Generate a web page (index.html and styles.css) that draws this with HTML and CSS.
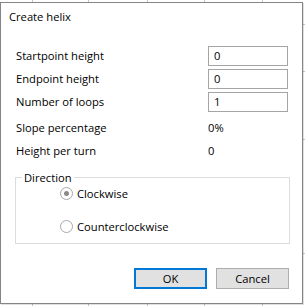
FILE: index.html
```html
<!DOCTYPE html>
<html>
<head>
<meta charset="utf-8">
<link rel="stylesheet" href="styles.css">
</head>
<body>
<div class="dialog">
  <div class="title">Create helix</div>
  <div class="form inputs">
    <label class="lbl">Startpoint height</label>
    <div class="field">0</div>
    <label class="lbl">Endpoint height</label>
    <div class="field">0</div>
    <label class="lbl">Number of loops</label>
    <div class="field">1</div>
  </div>
  <div class="form values">
    <div class="lbl">Slope percentage</div>
    <div class="val">0%</div>
    <div class="lbl">Height per turn</div>
    <div class="val">0</div>
  </div>
  <fieldset class="group">
    <legend class="legend">Direction</legend>
    <label class="radio"><span class="dot checked"></span>Clockwise</label>
    <label class="radio"><span class="dot"></span>Counterclockwise</label>
  </fieldset>
  <div class="buttons">
    <div class="btn primary">OK</div>
    <div class="btn">Cancel</div>
  </div>
</div>
</body>
</html>
```

FILE: styles.css
```css
html, body {
  margin: 0;
  padding: 0;
}
body {
  width: 305px;
  height: 306px;
  overflow: hidden;
  font-family: "Segoe UI", "Open Sans", sans-serif;
  font-size: 11.2px;
  line-height: 15px;
  color: #000;
  background-color: #fff;
  background-image:
    linear-gradient(#c6c6c6, #c6c6c6),
    linear-gradient(#c6c6c6, #c6c6c6),
    linear-gradient(#c6c6c6, #c6c6c6),
    linear-gradient(#c6c6c6, #c6c6c6),
    linear-gradient(#c6c6c6, #c6c6c6),
    linear-gradient(#c6c6c6, #c6c6c6),
    linear-gradient(#c6c6c6, #c6c6c6),
    linear-gradient(#c6c6c6, #c6c6c6),
    linear-gradient(#c6c6c6, #c6c6c6);
  background-repeat: no-repeat;
  background-size: 1px 100%, 1px 100%, 1px 100%, 1px 100%, 1px 100%, 100% 1px, 100% 1px, 100% 1px, 100% 1px;
  background-position: 32px 0, 88px 0, 147px 0, 204px 0, 262px 0, 0 24px, 0 71px, 0 139px, 0 253px;
}
.dialog {
  box-sizing: border-box;
  margin-top: 2px;
  width: 303px;
  height: 302px;
  background: #fff;
  border: 1px solid #858585;
  box-shadow: 1px 1px 0 rgba(0,0,0,0.12);
  display: flex;
  flex-direction: column;
}
.title {
  padding: 6px 0 0 8px;
  height: 15px;
}
.form {
  margin-left: 15px;
  display: grid;
  grid-template-columns: 192px 80px;
  grid-auto-rows: 20px;
  row-gap: 3px;
  align-items: center;
}
.inputs {
  margin-top: 22px;
}
.values {
  margin-top: 6px;
}
.lbl {
  display: block;
  padding-bottom: 2px;
}
.field {
  box-sizing: border-box;
  height: 20px;
  border: 1px solid #a5a5a5;
  padding-left: 5px;
  line-height: 18px;
  align-self: stretch;
}
.val {
  padding-bottom: 2px;
}
.group {
  box-sizing: border-box;
  margin: 9px 0 0 14px;
  width: 275px;
  height: 74px;
  border: 1px solid #dcdcdc;
  padding: 0;
  display: flex;
  flex-direction: column;
  gap: 15px;
}
.legend {
  margin-left: 6px;
  padding: 0 2px;
  line-height: 15px;
}
.radio {
  display: flex;
  align-items: center;
  height: 18px;
  margin-left: 44px;
}
.radio:first-of-type {
  margin-top: -1px;
}
.dot {
  box-sizing: border-box;
  width: 13px;
  height: 13px;
  border: 1px solid #a8a8a8;
  border-radius: 50%;
  margin-right: 4px;
  display: flex;
  align-items: center;
  justify-content: center;
}
.dot.checked::after {
  content: "";
  width: 5px;
  height: 5px;
  border-radius: 50%;
  background: #8a8a8a;
}
.buttons {
  margin: 24px 13px 0 0;
  display: flex;
  justify-content: flex-end;
  gap: 9px;
}
.btn {
  box-sizing: border-box;
  width: 73px;
  height: 21px;
  background: #e1e1e1;
  border: 1px solid #adadad;
  display: flex;
  align-items: center;
  justify-content: center;
}
.btn.primary {
  border: 2px solid #0078d7;
}
```
